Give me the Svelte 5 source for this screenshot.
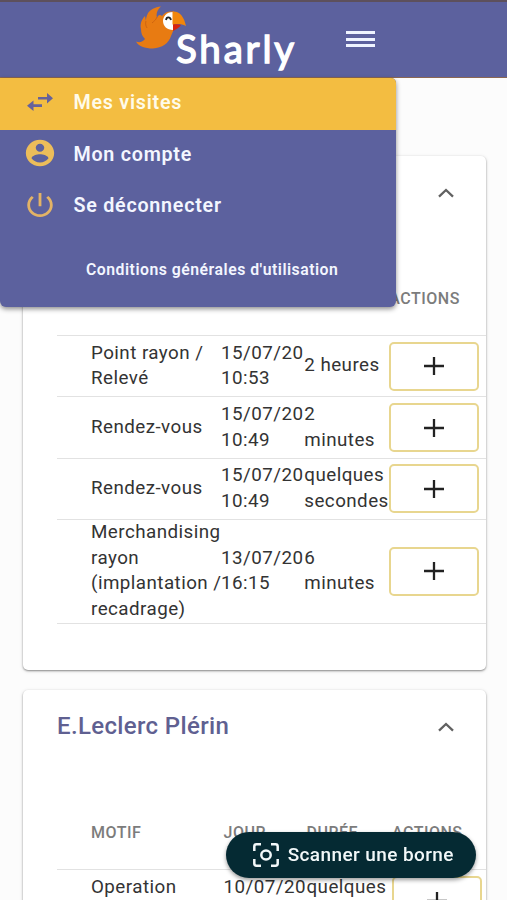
<script>
  let menuOpen = true;

  const menuItems = [
    { label: 'Mes visites', icon: 'swap', active: true },
    { label: 'Mon compte', icon: 'account', active: false },
    { label: 'Se déconnecter', icon: 'power', active: false }
  ];

  let stores = [
    {
      name: '',
      open: true,
      visits: [
        { motif: 'Point rayon /\nRelevé', jour: '15/07/20\n10:53', duree: '2 heures' },
        { motif: 'Rendez-vous', jour: '15/07/20\n10:49', duree: '2\nminutes' },
        { motif: 'Rendez-vous', jour: '15/07/20\n10:49', duree: 'quelques\nsecondes' },
        { motif: 'Merchandising\nrayon\n(implantation /\nrecadrage)', jour: '13/07/20\n16:15', duree: '6\nminutes' }
      ]
    },
    {
      name: 'E.Leclerc Plérin',
      open: true,
      wide: true,
      visits: [
        { motif: 'Operation', jour: '10/07/20', duree: 'quelques' }
      ]
    }
  ];

  function toggleMenu() {
    menuOpen = !menuOpen;
  }

  function toggleStore(store) {
    store.open = !store.open;
    stores = stores;
  }
</script>

<div class="page">
  <header class="navbar">
    <div class="brand">
      <svg class="bird" width="52" height="44" viewBox="0 0 52 44" aria-hidden="true">
        <path fill="#e87b12" d="M25 0.500 C19 1 14 4 12 7 C10 11 10 13 10 15 L9 10 C5 14 4 19 5 23 C5 27 6 30 9 33 C7 36 3 37 0 35.500 C2 40 9 42.500 17 42.500 C26 42 33 37 35 30 L38 23 L38 5.500 C32 5 29 6 26 10 C24 8 22 9 21 12 C20 8 21 4 25 0.500 Z" />
        <path fill="none" stroke="#cf6510" stroke-width="1" d="M21 11 C20 14 18 15 16 17 M10 15 C9 18 10 20 11 22" />
        <path fill="#fff" d="M37 6 C30 6 27 11 27 15 C27 20 31 24 37 24 Z" />
        <path fill="#f2860b" d="M36.500 5.500 C44 5 48 11 50 20 C45 17.500 41 18 36.500 18.500 Z" />
        <path fill="#d9230f" d="M37 18.500 C40 18 43 18 45 19 C43 22 40 23 37 25 Z" />
        <path fill="none" stroke="#222" stroke-width="1.800" d="M30 14 C30.500 10.500 34 10.500 35 14" />
      </svg>
      <span class="brand-name">Sharly</span>
    </div>
    <button class="burger" on:click={toggleMenu} aria-label="Menu">
      <span></span><span></span><span></span>
    </button>

    {#if menuOpen}
      <nav class="menu">
        {#each menuItems as item}
          <a href="#top" class="menu-item" class:active={item.active}>
            {#if item.icon === 'swap'}
              <svg width="26" height="18" viewBox="0 0 26 18">
                <path fill="#66629a" d="M11 4h9V0l6 5.200-6 5.200V6.500h-9z M15 11.300H6.500V7.500L0 12.700l6.500 5.200v-4H15z" />
              </svg>
            {:else if item.icon === 'account'}
              <svg width="34" height="32" viewBox="0 0 24 24" preserveAspectRatio="none">
                <path fill="#ecbd5a" d="M12 2C6.480 2 2 6.480 2 12s4.480 10 10 10 10-4.480 10-10S17.520 2 12 2zm0 3c1.660 0 3 1.340 3 3s-1.340 3-3 3-3-1.340-3-3 1.340-3 3-3zm0 14.200c-2.500 0-4.710-1.280-6-3.220.030-1.990 4-3.080 6-3.080 1.990 0 5.970 1.090 6 3.080-1.290 1.940-3.500 3.220-6 3.220z" />
              </svg>
            {:else}
              <svg width="34" height="32" viewBox="0 0 24 24" preserveAspectRatio="none">
                <path fill="#e3b366" d="M13 3h-2v10h2V3zm4.830 2.170l-1.420 1.420C17.990 7.860 19 9.810 19 12c0 3.870-3.130 7-7 7s-7-3.130-7-7c0-2.190 1.010-4.140 2.580-5.420L6.170 5.170C4.230 6.820 3 9.260 3 12c0 4.970 4.030 9 9 9s9-4.030 9-9c0-2.740-1.230-5.180-3.170-6.830z" />
              </svg>
            {/if}
            <span>{item.label}</span>
          </a>
        {/each}
        <a href="#top" class="terms">Conditions générales d'utilisation</a>
      </nav>
    {/if}
  </header>

  <main>
    {#each stores as store}
      <section class="card" class:wide={store.wide}>
        <div class="card-head">
          <h2>{store.name}</h2>
          <button class="toggle" on:click={() => toggleStore(store)} aria-label="Afficher les visites">
            <svg width="16" height="10" viewBox="0 0 16 10">
              <path fill="none" stroke="#616161" stroke-width="2.300" d="M1 8.700 8 2l7 6.700" />
            </svg>
          </button>
        </div>
        {#if store.open}
          <div class="row labels">
            <span>MOTIF</span><span>JOUR</span><span>DURÉE</span><span>ACTIONS</span>
          </div>
          {#each store.visits as visit}
            <div class="row visit">
              <span>{visit.motif}</span>
              <span>{visit.jour}</span>
              <span>{visit.duree}</span>
              <button class="add" aria-label="Ajouter">
                <svg width="20" height="18" viewBox="0 0 20 18">
                  <path fill="none" stroke="#222" stroke-width="2.300" d="M0 9h20M10 0v18" />
                </svg>
              </button>
            </div>
          {/each}
        {/if}
      </section>
    {/each}
  </main>

  <button class="scan">
    <svg width="26" height="24" viewBox="0 0 26 24" fill="none" stroke="#f2f8f9" stroke-width="2.500">
      <path d="M1.300 8V3.500Q1.300 1.300 3.500 1.300H8M18 1.300h4.500q2.200 0 2.200 2.200V8M24.700 16v4.500q0 2.200-2.200 2.200H18M8 22.700H3.500q-2.200 0-2.200-2.200V16" />
      <ellipse cx="13" cy="12" rx="4.700" ry="4.500" />
    </svg>
    <span>Scanner une borne</span>
  </button>
</div>

<style>
  :global(body) {
    background: #fcfcfc;
    overflow: hidden;
  }

  .page {
    height: 900px;
    overflow: hidden;
    font-family: Roboto, sans-serif;
    color: #333;
  }

  button {
    padding: 0;
    background: none;
    border: none;
    font-family: inherit;
  }

  a {
    color: #f3f6ff;
    text-decoration: none;
  }

  svg {
    display: block;
    flex: none;
  }

  /* Top bar */
  .navbar {
    position: relative;
    z-index: 2;
    display: flex;
    height: 78px;
    box-sizing: border-box;
    padding-left: 136px;
    background: #5c619e;
    border-top: 2px solid #5d505c;
    border-bottom: 1px solid #8b6753;
  }

  .brand {
    display: flex;
    width: 210px;
  }

  .bird {
    margin-top: 4px;
  }

  .brand-name {
    margin: 21px 0 0 -12px;
    font-family: Lato, sans-serif;
    font-size: 38.500px;
    line-height: 50px;
    font-weight: 400;
    letter-spacing: 2.800px;
    color: #fff;
    -webkit-text-stroke: 1.400px #fff;
  }

  .burger {
    display: flex;
    flex-direction: column;
    gap: 3.500px;
    align-self: flex-start;
    margin-top: 29px;
  }

  .burger span {
    width: 29px;
    height: 3px;
    background: #eef3ff;
  }

  /* Menu lies over the first card */
  .menu {
    position: absolute;
    top: 76px;
    left: 0;
    width: 396px;
    height: 229px;
    overflow: hidden;
    background: #5c619e;
    border-radius: 0 5px 6px 6px;
    box-shadow: 0 2px 5px rgba(0, 0, 0, 0.45);
  }

  .menu-item {
    display: grid;
    grid-template-columns: 34px auto;
    justify-items: center;
    justify-content: start;
    align-items: center;
    column-gap: 17px;
    height: 51.500px;
    padding: 0 0 2px 22.500px;
    box-sizing: border-box;
    font-size: 19.700px;
    font-weight: 600;
    letter-spacing: 0.750px;
  }

  .menu-item svg {
    margin-bottom: 2px;
  }

  .menu-item.active {
    background: #f3bd41;
    color: #fffbe9;
  }

  .terms {
    display: block;
    margin: 27px 0 0 86px;
    font-size: 15.800px;
    line-height: 20px;
    font-weight: 600;
    letter-spacing: 0.500px;
  }

  /* Store cards */
  main {
    display: flex;
    flex-direction: column;
    gap: 20px;
    padding: 78px 21px 0 23px;
  }

  .card {
    flex: none;
    height: 514px;
    box-sizing: border-box;
    padding-left: 34px;
    background: #fff;
    border-radius: 5px;
    box-shadow: 0 1px 2px rgba(0, 0, 0, 0.4), 0 1px 4px rgba(0, 0, 0, 0.12);
  }

  .card-head {
    display: flex;
    justify-content: space-between;
    align-items: center;
    height: 73px;
    padding-right: 32px;
  }

  h2 {
    margin: 0 0 2px;
    font-size: 24px;
    font-weight: 500;
    letter-spacing: 0.350px;
    color: #5f6091;
  }

  .row {
    display: grid;
    grid-template-columns: 130px 83.300px 85px 90px;
    padding-left: 34px;
    border-bottom: 1px solid #e2e2e2;
  }

  .wide .row {
    grid-template-columns: 132.500px 83px 85.500px 90px;
  }

  .labels {
    height: 106px;
    font-size: 16px;
    line-height: 20px;
    font-weight: 500;
    letter-spacing: 0.500px;
    color: #7c7c7c;
  }

  .labels span {
    margin-top: 60px;
  }

  .visit {
    align-items: center;
    min-height: 60.400px;
    font-size: 18.800px;
    line-height: 25.600px;
    letter-spacing: 0.450px;
    white-space: pre;
  }

  .wide .visit {
    align-items: start;
    padding-top: 5px;
  }

  .add {
    display: flex;
    justify-content: center;
    align-items: center;
    height: 49px;
    border: 2px solid #e8d68f;
    border-radius: 5px;
    box-sizing: border-box;
  }

  .wide .add {
    margin-top: 1px;
  }

  /* Floating scan button */
  .scan {
    position: fixed;
    z-index: 3;
    right: 31px;
    bottom: 22px;
    display: flex;
    justify-content: center;
    align-items: center;
    gap: 8.500px;
    width: 250px;
    height: 46px;
    padding-left: 5px;
    border-radius: 23px;
    background: #052a33;
    box-shadow: 0 2px 4px rgba(0, 0, 0, 0.4);
    color: #f2f8f9;
    font-size: 19px;
    font-weight: 500;
    letter-spacing: 0.400px;
    white-space: nowrap;
  }

  .scan span {
    margin-bottom: 2px;
  }
</style>
